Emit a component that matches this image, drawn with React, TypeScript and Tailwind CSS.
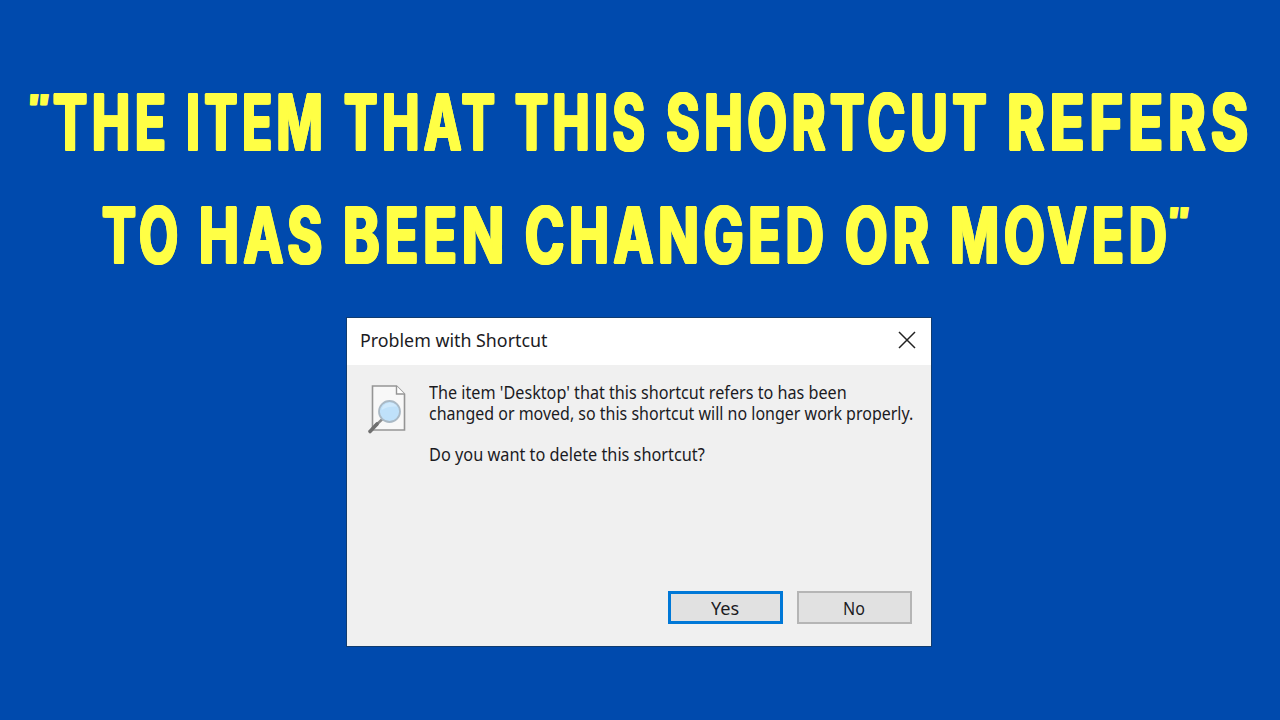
import { useLayoutEffect, useRef, useState } from "react";

type FitTextProps = {
  text: string;
  width: number;
  // trailing letter spacing that should not count as part of the text
  tracking?: number;
};

// squeezes the text horizontally so it fills exactly `width` pixels
const FitText = ({ text, width, tracking = 0 }: FitTextProps) => {
  const ref = useRef<HTMLSpanElement>(null);
  const [scale, setScale] = useState(1);

  useLayoutEffect(() => {
    if (ref.current) setScale(width / (ref.current.offsetWidth - tracking));
  }, [text, width, tracking]);

  return (
    <span className="block whitespace-nowrap" style={{ width }}>
      <span
        ref={ref}
        className="inline-block origin-left"
        style={{ transform: `scaleX(${scale})` }}
      >
        {text}
      </span>
    </span>
  );
};

const firstLine = [
  { text: "THE", width: 113 },
  { text: "ITEM", width: 137 },
  { text: "THAT", width: 151 },
  { text: "THIS", width: 130 },
  { text: "SHORTCUT", width: 321 },
  { text: "REFERS", width: 241 },
];

const secondLine = [
  { text: "TO", width: 76 },
  { text: "HAS", width: 123 },
  { text: "BEEN", width: 161 },
  { text: "CHANGED", width: 299 },
  { text: "OR", width: 84 },
  { text: "MOVED", width: 217 },
];

const Quote = () => (
  <span className="-ml-[5px] -skew-x-6 text-[34px] leading-[81px] font-black tracking-normal [text-shadow:0.500px_0_#ffff45,-0.500px_0_#ffff45]">
    <FitText text={'"'} width={25} />
  </span>
);

const ShortcutIcon = () => (
  <svg width="42" height="52" viewBox="0 0 42 52" fill="none">
    <path d="M6.500 3h24l8 8v36h-32z" fill="#f8f8f8" stroke="#959595" strokeWidth="1.600" />
    <path d="M30.500 3v8h8" fill="#fff" stroke="#959595" strokeWidth="1.400" />
    <path d="M16.500 36 9 43" stroke="#8a8a8a" strokeWidth="2.500" />
    <path d="M11 41 4 48.500" stroke="#707070" strokeWidth="3.600" strokeLinecap="round" />
    <circle cx="23.500" cy="28.500" r="10.500" fill="#bfe1fa" stroke="#aab9c5" strokeWidth="1.800" />
    <path d="M15.500 27a8.500 8.500 0 0 1 15.500-3.500c-5-.5-11 .5-15.500 3.500z" fill="#cfe9fc" />
  </svg>
);

const App = () => {
  return (
    <main className="flex h-[720px] w-[1280px] flex-col overflow-hidden bg-[#004aad]">
      <h1 className="pt-[66px] font-['Inter',sans-serif] text-[77px] leading-[113px] font-bold tracking-[7px] text-[#ffff45] [text-shadow:2px_0_#ffff45,-2px_0_#ffff45,0_1px_#ffff45,0_-1px_#ffff45,1.500px_1px_#ffff45,-1.500px_1px_#ffff45,1.500px_-1px_#ffff45,-1.500px_-1px_#ffff45]">
        <span className="flex h-[113px] pl-[29px]">
          <Quote />
          <span className="ml-[4px] flex w-[1195px] justify-between">
            {firstLine.map((word) => (
              <FitText key={word.text} text={word.text} width={word.width} tracking={7} />
            ))}
          </span>
        </span>
        <span className="flex h-[113px] pl-[102px]">
          <span className="flex w-[1065px] justify-between">
            {secondLine.map((word) => (
              <FitText key={word.text} text={word.text} width={word.width} tracking={7} />
            ))}
          </span>
          <span className="ml-[2px] flex">
            <Quote />
          </span>
        </span>
      </h1>

      <section className="mt-[25px] ml-[346px] flex h-[330px] w-[586px] flex-col border border-[#103c70] bg-[#f0f0f0] font-['Noto_Sans',sans-serif] text-[#1b1b1f]">
        <header className="flex h-[47px] items-center justify-between bg-white pr-[15px] pb-[3px] pl-[13px]">
          <h2 className="pt-[1px] text-[18px]">
            <FitText text="Problem with Shortcut" width={187} />
          </h2>
          <svg width="18" height="18" viewBox="0 0 18 18" stroke="#222" strokeWidth="1.500">
            <path d="M1 1l16 16M17 1L1 17" />
          </svg>
        </header>

        <div className="flex flex-1 pt-[18px] pl-[19px]">
          <ShortcutIcon />
          <div className="-mt-[1px] ml-[21px] text-[18px] leading-[20.500px]">
            <FitText text="The item 'Desktop' that this shortcut refers to has been" width={418} />
            <FitText text="changed or moved, so this shortcut will no longer work properly." width={484} />
            <div className="mt-[21px]">
              <FitText text="Do you want to delete this shortcut?" width={276} />
            </div>
          </div>
        </div>

        <footer className="flex justify-end gap-[14px] pr-[19px] pb-[22px] text-[17.500px]">
          <button className="flex h-[33px] w-[115px] items-center justify-center border-[3px] border-[#0078d7] bg-[#e1e1e1] pt-[2px] pr-[2px]">
            <FitText text="Yes" width={28} />
          </button>
          <button className="flex h-[33px] w-[115px] items-center justify-center border-2 border-[#b5b5b5] bg-[#e1e1e1] pt-[2px] pr-[2px]">
            <FitText text="No" width={22} />
          </button>
        </footer>
      </section>
    </main>
  );
};

export default App;
